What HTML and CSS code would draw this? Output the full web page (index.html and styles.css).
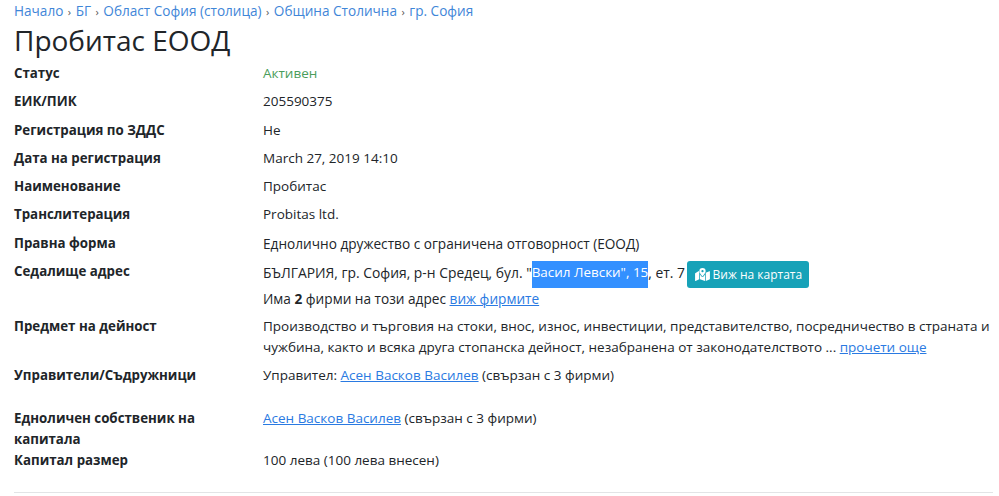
FILE: index.html
```html
<!DOCTYPE html>
<html lang="bg">
<head>
    <meta charset="UTF-8">
    <title>Пробитас ЕООД</title>
    <link rel="stylesheet" href="styles.css">
</head>
<body>
    <div class="container">
        <nav class="crumbs">
            <a href="#">Начало</a><span class="sep">›</span><a href="#">БГ</a><span class="sep">›</span><a href="#">Област София (столица)</a><span class="sep">›</span><a href="#">Община Столична</a><span class="sep">›</span><a href="#">гр. София</a>
        </nav>
        <h1>Пробитас ЕООД</h1>

        <dl class="info">
            <div class="row"><dt>Статус</dt><dd class="active">Активен</dd></div>
            <div class="row"><dt>ЕИК/ПИК</dt><dd>205590375</dd></div>
            <div class="row"><dt>Регистрация по ЗДДС</dt><dd>Не</dd></div>
            <div class="row"><dt>Дата на регистрация</dt><dd>March 27, 2019 14:10</dd></div>
            <div class="row"><dt>Наименование</dt><dd>Пробитас</dd></div>
            <div class="row"><dt>Транслитерация</dt><dd>Probitas ltd.</dd></div>
            <div class="row"><dt>Правна форма</dt><dd class="wide-text">Еднолично дружество с ограничена отговорност (ЕООД)</dd></div>
            <div class="row">
                <dt>Седалище адрес</dt>
                <dd>
                    <div class="address">БЪЛГАРИЯ, гр. София, р-н Средец, бул. "<span class="selected">Васил Левски", 15</span>, ет. 7
                        <a class="map-btn" href="#">
                            <svg class="map-icon" viewBox="0 0 16 14" width="15" height="13" aria-hidden="true">
                                <path fill="currentColor" d="M8 0a3.4 3.4 0 0 0-3.4 3.4C4.600 5 6.700 7.600 7.500 8.500a.6.6 0 0 0 1 0c.8-.9 2.900-3.500 2.900-5.100A3.400 3.400 0 0 0 8 0zm0 4.600a1.200 1.200 0 1 1 0-2.400 1.200 1.200 0 0 1 0 2.400zM.6 5.400A1 1 0 0 0 0 6.300v7.300c0 .3.300.5.500.4L4.500 12V4.300c-.2-.4-.4-.8-.5-1.200zM8 9.700c-.4 0-.8-.2-1.100-.5-.5-.6-1.100-1.300-1.600-2.100V12l5.400 2V7.100c-.5.800-1.100 1.500-1.600 2.100-.3.300-.7.500-1.100.5zM15.500 3.500 11.500 5v9l3.900-1.600c.4-.1.600-.5.600-.9V3.900c0-.3-.3-.5-.5-.4z"/>
                            </svg>
                            Виж на картата
                        </a>
                    </div>
                    <div class="wide-text">Има <b>2</b> фирми на този адрес <a href="#">виж фирмите</a></div>
                </dd>
            </div>
            <div class="row"><dt>Предмет на дейност</dt><dd>Производство и търговия на стоки, внос, износ, инвестиции, представителство, посредничество в страната и чужбина, както и всяка друга стопанска дейност, незабранена от законодателството ... <a href="#">прочети още</a></dd></div>
            <div class="row row-tall"><dt>Управители/Съдружници</dt><dd>Управител: <a href="#">Асен Васков Василев</a> (свързан с 3 фирми)</dd></div>
            <div class="row row-tight"><dt>Едноличен собственик на капитала</dt><dd><a href="#">Асен Васков Василев</a> (свързан с 3 фирми)</dd></div>
            <div class="row"><dt>Капитал размер</dt><dd>100 лева (100 лева внесен)</dd></div>
        </dl>
        <hr>
    </div>
</body>
</html>
```

FILE: styles.css
```css
* {
    box-sizing: border-box;
    margin: 0;
    padding: 0;
}

body {
    font-family: 'Open Sans', sans-serif;
    font-size: 13.5px;
    line-height: 21px;
    color: #212529;
    background-color: #fff;
    overflow: hidden;
}

a {
    color: #2a7ae2;
}

.container {
    padding: 0 6px 0 14px;
}

.crumbs {
    height: 22px;
    font-size: 13.6px;
}

.crumbs a {
    color: #3f86d8;
    text-decoration: none;
}

.sep {
    margin: 0 4.5px;
    color: #555;
    font-size: 11px;
}

h1 {
    font-size: 28px;
    font-weight: 400;
    line-height: 36px;
    margin-bottom: 5px;
}

.row {
    display: grid;
    grid-template-columns: 249px 1fr;
    margin-bottom: 7.25px;
}

.row-tall {
    margin-bottom: 22px;
}

.row-tight {
    margin-bottom: 0;
}

dt {
    font-size: 13.3px;
    font-weight: 700;
    padding-right: 40px;
}

.active {
    color: #4a9d5b;
}

.wide-text {
    font-size: 13.65px;
}

.address {
    height: 27px;
    line-height: 23px;
    white-space: nowrap;
    font-size: 13.86px;
}

.selected {
    display: inline-block;
    height: 27px;
    font-size: 13.45px;
    vertical-align: top;
    background-color: #3390ff;
    color: #fff;
}

.map-btn {
    display: inline-flex;
    align-items: center;
    gap: 3px;
    height: 27px;
    padding: 0 7px 0 8px;
    margin-left: -2px;
    font-size: 12px;
    color: #fff;
    background-color: #17a2b8;
    border-radius: 3px;
    text-decoration: none;
    vertical-align: top;
}

.map-icon {
    flex-shrink: 0;
}

hr {
    border: none;
    border-top: 1px solid #e2e4e6;
    margin-top: 21px;
}
```
